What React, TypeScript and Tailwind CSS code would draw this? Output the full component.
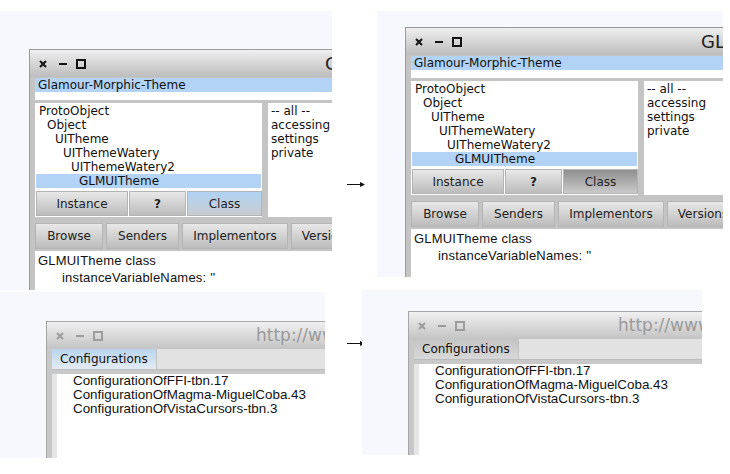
import React from 'react';

const dejavu = { fontFamily: '"DejaVu Sans", sans-serif' };
const liber = { fontFamily: '"Liberation Sans", Arial, sans-serif' };

function TitleIcons({ dim }: { dim?: boolean }) {
  const c = dim ? '#9c9c9c' : '#111';
  return (
    <div className="flex items-center">
      <svg width="8" height="8" viewBox="0 0 8 8" className="ml-[9px]">
        <path d="M1 1 L7 7 M7 1 L1 7" stroke={c} strokeWidth="2" />
      </svg>
      <svg width="8" height="8" viewBox="0 0 8 8" className="ml-[12px]">
        <path d="M0 4 H8" stroke={c} strokeWidth="2" />
      </svg>
      <svg width="10" height="10" viewBox="0 0 10 10" className="ml-[9px]">
        <rect x="1" y="1" width="8" height="8" fill="none" stroke={c} strokeWidth="2" />
      </svg>
    </div>
  );
}

function Btn({ label, w, state, bold }: { label: string; w: string; state?: 'blue' | 'pressed'; bold?: boolean }) {
  const bg =
    state === 'blue'
      ? 'bg-gradient-to-b from-[#b0d2f4] to-[#c9ccd0]'
      : state === 'pressed'
        ? 'bg-gradient-to-b from-[#8f8f8f] to-[#cacaca]'
        : 'bg-gradient-to-b from-[#e8e8e8] to-[#bcbcbc]';
  return (
    <div
      className={`${w} ${bg} ${bold ? 'font-bold' : ''} h-full shrink-0 flex items-center justify-center border border-[#b4b4b4] text-[12px] text-[#222] whitespace-nowrap`}
      style={dejavu}
    >
      {label}
    </div>
  );
}

const classes = ['ProtoObject', 'Object', 'UITheme', 'UIThemeWatery', 'UIThemeWatery2', 'GLMUITheme'];
const indents = ['pl-[3px]', 'pl-[11px]', 'pl-[19px]', 'pl-[27px]', 'pl-[35px]', 'pl-[43px]'];
const cats = ['-- all --', 'accessing', 'settings', 'private'];

function BrowserWindow({ pressed }: { pressed?: boolean }) {
  return (
    <div className="w-[460px] h-[300px] border-l border-t border-[#9a9a9a] bg-[#c4c4c4] flex flex-col">
      <div className="h-[27px] shrink-0 flex items-center bg-gradient-to-b from-[#efefef] to-[#bdbdbd]">
        <TitleIcons />
        <span className="ml-[239px] text-[18px] text-[#222] whitespace-nowrap" style={dejavu}>
          GLMUITheme class
        </span>
      </div>
      <div className="flex-1 flex flex-col pl-[5px] pt-[1px]">
        <div className="h-[22px] bg-white">
          <div className="h-[14px] bg-[#b2d3f5] pl-[3px] text-[12px] leading-[14px] text-[#111]" style={dejavu}>
            Glamour-Morphic-Theme
          </div>
        </div>
        <div className="mt-[3px] h-[114px] flex gap-[6px]">
          <div className="w-[227px] bg-white flex flex-col pt-[1px] px-[1px]">
            {classes.map((c, i) => (
              <div
                key={c}
                className={`h-[14px] ${indents[i]} text-[12px] leading-[14px] text-[#111] ${i === 5 ? 'bg-[#b2d3f5]' : ''}`}
                style={dejavu}
              >
                {c}
              </div>
            ))}
            <div className="mt-[3px] h-[25px] flex gap-[1px]">
              <Btn label="Instance" w="w-[92px]" />
              <Btn label="?" w="w-[57px]" bold />
              <Btn label="Class" w="w-[75px]" state={pressed ? 'pressed' : 'blue'} />
            </div>
          </div>
          <div className="flex-1 bg-white pt-[1px] pl-[3px]">
            {cats.map((c) => (
              <div key={c} className="h-[14px] text-[12px] leading-[14px] text-[#111]" style={dejavu}>
                {c}
              </div>
            ))}
          </div>
        </div>
        <div className="mt-[6px] h-[26px] flex gap-[3px]">
          <Btn label="Browse" w="w-[68px]" />
          <Btn label="Senders" w="w-[73px]" />
          <Btn label="Implementors" w="w-[106px]" />
          <Btn label="Versions" w="w-[72px]" />
        </div>
        <div
          className="mt-[2px] flex-1 bg-white pt-[1px] pl-[3px] text-[13px] leading-[17px] tracking-[0.2px] text-[#111]"
          style={liber}
        >
          <div>GLMUITheme class</div>
          <div className="pl-[24px]">instanceVariableNames: ''</div>
        </div>
      </div>
    </div>
  );
}

const configs = ['ConfigurationOfFFI-tbn.17', 'ConfigurationOfMagma-MiguelCoba.43', 'ConfigurationOfVistaCursors-tbn.3'];

function ConfigWindow({ blueTab }: { blueTab?: boolean }) {
  return (
    <div className="w-[420px] h-[200px] border-l border-t border-[#a6a6a6] bg-[#c8c8c8] flex flex-col">
      <div className="h-[27px] shrink-0 flex items-center bg-gradient-to-b from-[#f0f0f0] to-[#c4c4c4]">
        <TitleIcons dim />
        <span className="ml-[153px] text-[17px] text-[#9a9a9a] whitespace-nowrap" style={dejavu}>
          http://www.squeaksource.com/MetacelloRepository
        </span>
      </div>
      <div className="flex-1 flex flex-col pl-[5px]">
        <div className="h-[21px] flex bg-[#e2e2e2] border-b border-[#bcbcbc]">
          <div
            className={`w-[105px] h-full flex items-center pl-[8px] text-[12px] text-[#111] border-r border-[#c2c2c2] ${
              blueTab ? 'bg-gradient-to-b from-[#b8d4ee] to-[#e4ecf4]' : 'bg-gradient-to-b from-[#c4c4c4] to-[#d8d8d8]'
            }`}
            style={dejavu}
          >
            Configurations
          </div>
        </div>
        <div className="mt-[4px] flex-1 flex">
          <div className="w-[5px] bg-[#e6e6e6]" />
          <div className="flex-1 bg-white pl-[16px]">
            {configs.map((c) => (
              <div key={c} className="h-[14px] text-[13.4px] leading-[14px] text-[#111] whitespace-nowrap" style={liber}>
                {c}
              </div>
            ))}
          </div>
        </div>
      </div>
    </div>
  );
}

function Arrow() {
  return (
    <svg width="18" height="7" viewBox="0 0 18 7">
      <path d="M0 3.5 H14" stroke="#111" strokeWidth="1" />
      <path d="M13 1 L18 3.5 L13 6 Z" fill="#111" />
    </svg>
  );
}

export default function App() {
  return (
    <div className="w-[730px] h-[474px] bg-white overflow-hidden">
      <div className="flex items-start pt-[11px]">
        <div className="w-[332px] h-[279px] bg-[#f7f8fd] overflow-hidden pl-[29px] pt-[38px]">
          <BrowserWindow />
        </div>
        <div className="w-[45px] pt-[170px] pl-[15px]">
          <Arrow />
        </div>
        <div className="w-[346px] h-[266px] bg-[#f7f8fd] overflow-hidden pl-[28px] pt-[16px]">
          <BrowserWindow pressed />
        </div>
      </div>
      <div className="flex items-start">
        <div className="mt-[2px] w-[325px] h-[166px] bg-[#f7f8fd] overflow-hidden pl-[46px] pt-[29px]">
          <ConfigWindow blueTab />
        </div>
        <div className="w-[37px] pt-[50px] pl-[22px]">
          <Arrow />
        </div>
        <div className="w-[340px] h-[165px] bg-[#f7f8fd] overflow-hidden pl-[46px] pt-[21px]">
          <ConfigWindow />
        </div>
      </div>
    </div>
  );
}
